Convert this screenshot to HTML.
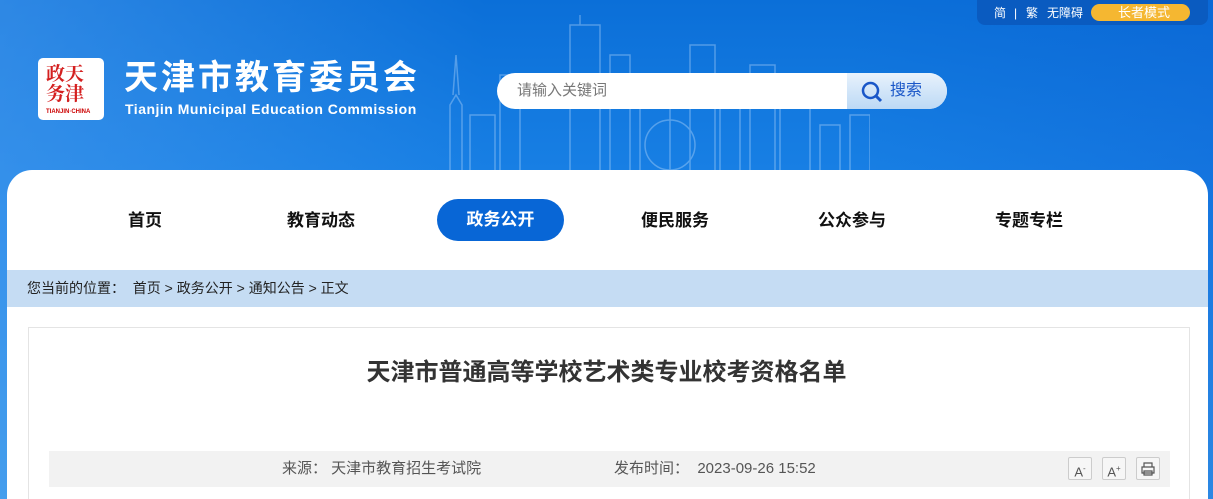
<!DOCTYPE html>
<html><head><meta charset="utf-8"><style>
*{margin:0;padding:0;box-sizing:border-box}
html,body{width:1213px;height:499px;overflow:hidden}
body{font-family:"Liberation Sans","Noto Sans CJK SC",sans-serif;background:linear-gradient(180deg,#0b6fd8 0%,#1a82e6 40%,#3a9bea 100%);position:relative}
.bg2{position:absolute;left:0;top:0;width:1213px;height:499px;background:linear-gradient(90deg,rgba(80,160,240,.5),rgba(0,0,0,0) 40%,rgba(0,0,0,0) 70%,rgba(10,90,210,.3))}
.top{position:absolute;left:977px;top:0;width:231px;height:25px;background:#0a5bc0;border-radius:0 0 8px 8px;color:#fff;font-size:12px}
.top span{position:absolute;top:6px;line-height:14px}
.elder{position:absolute;left:1091px;top:4px;width:99px;height:17px;background:#f5b731;border-radius:9px;color:#fff;font-size:13px;line-height:18px;padding-left:27px}
.logo{position:absolute;left:38px;top:58px;width:66px;height:62px;background:#fff;border-radius:5px}
.t1{position:absolute;left:124px;top:58px;color:#fff;font-size:34px;line-height:40px;font-weight:bold;letter-spacing:3px}
.t2{position:absolute;left:125px;top:101px;color:#fff;font-size:14px;line-height:17px;font-weight:bold;letter-spacing:.5px}
.search{position:absolute;left:497px;top:73px;width:450px;height:36px;background:#fff;border-radius:18px;overflow:hidden}
.search .ph{position:absolute;left:20px;top:9px;font-size:15px;line-height:18px;color:#777}
.search .btn{position:absolute;right:0;top:0;width:100px;height:36px;background:linear-gradient(180deg,#e8f2fc,#bcd9f5);color:#1a57c8;font-size:16px;line-height:36px;padding-left:43px}
.panel{position:absolute;left:7px;top:170px;width:1201px;height:329px;background:#fff;border-radius:25px 25px 0 0}
.nav{position:absolute;top:210px;font-size:17px;line-height:22px;font-weight:bold;color:#111}
.act{position:absolute;left:437px;top:199px;width:127px;height:42px;background:#0866d6;border-radius:21px;color:#fff;font-size:17px;font-weight:bold;text-align:center;line-height:42px}
.crumb{position:absolute;left:7px;top:270px;width:1201px;height:37px;background:#c5dcf3;font-size:14px;color:#222;line-height:37px;padding-left:20px}
.box{position:absolute;left:28px;top:327px;width:1162px;height:180px;border:1px solid #e4e4e4}
.title{position:absolute;left:0;width:1213px;top:358px;text-align:center;font-size:24px;line-height:30px;font-weight:bold;color:#333}
.info{position:absolute;left:49px;top:451px;width:1121px;height:36px;background:#f2f2f2;font-size:15px;color:#555;line-height:36px}
.ib{position:absolute;top:457px;width:24px;height:23px;border:1px solid #ccc;border-radius:2px;background:#f6f6f6;font-size:13px;color:#555;text-align:center;line-height:22px}
</style></head><body>
<div class="bg2"></div>
<svg style="position:absolute;left:420px;top:15px" width="450" height="155" opacity=".35">
<g fill="none" stroke="#cfe6ff" stroke-width="1.5">
<path d="M30 160V90l6-10 6 10v70M33 80l3-40 3 40M50 160V100h25v60M80 160V60h20v100M150 160V10h30v150M160 10V0M190 160V40h20v120M220 160V70h30v120M270 160V30h25v130M300 160V80h20v80M330 160V50h25v110M360 160V90h30v70M400 160V110h20v50M430 160V100h20v60"/>
<circle cx="250" cy="130" r="25"/></g></svg>
<div class="top"><span style="left:17px">简</span><span style="left:37px">|</span><span style="left:49px">繁</span><span style="left:70px">无障碍</span></div>
<div class="elder">长者模式</div>
<div class="logo"><div style="position:absolute;left:8px;top:5px;width:50px;height:44px;color:#d42020;font-size:19px;line-height:20px;font-weight:bold;font-family:'Noto Serif CJK SC',serif">政天<br>务津</div><div style="position:absolute;left:8px;top:51px;font-size:6px;color:#c00;font-weight:bold">TIANJIN·CHINA</div></div>
<div class="t1">天津市教育委员会</div>
<div class="t2">Tianjin Municipal Education Commission</div>
<div class="search"><span class="ph">请输入关键词</span><div class="btn">搜索<svg style="position:absolute;left:14px;top:8px" width="22" height="22"><circle cx="9.5" cy="9.5" r="7.5" fill="none" stroke="#1a57c8" stroke-width="2.5"/><path d="M15 15l5 5" stroke="#1a57c8" stroke-width="3"/></svg></div></div>
<div class="panel"></div>
<div class="nav" style="left:128px">首页</div>
<div class="nav" style="left:287px">教育动态</div>
<div class="act">政务公开</div>
<div class="nav" style="left:641px">便民服务</div>
<div class="nav" style="left:818px">公众参与</div>
<div class="nav" style="left:995px">专题专栏</div>
<div class="crumb">您当前的位置：&nbsp;&nbsp;首页 &gt; 政务公开 &gt; 通知公告 &gt; 正文</div>
<div class="box"></div>
<div class="title">天津市普通高等学校艺术类专业校考资格名单</div>
<div class="info"><span style="position:absolute;left:233px">来源：&nbsp;天津市教育招生考试院</span><span style="position:absolute;left:565px">发布时间：&nbsp;&nbsp;2023-09-26 15:52</span></div>
<div class="ib" style="left:1068px">A<sup style="font-size:8px">-</sup></div>
<div class="ib" style="left:1102px">A<sup style="font-size:8px">+</sup></div>
<div class="ib" style="left:1136px"><svg width="14" height="14" style="margin-top:4px"><path d="M3 5V1h8v4M1 5h12v6H1zM3 9h8v4H3z" fill="none" stroke="#555" stroke-width="1.2"/></svg></div>
</body></html>
